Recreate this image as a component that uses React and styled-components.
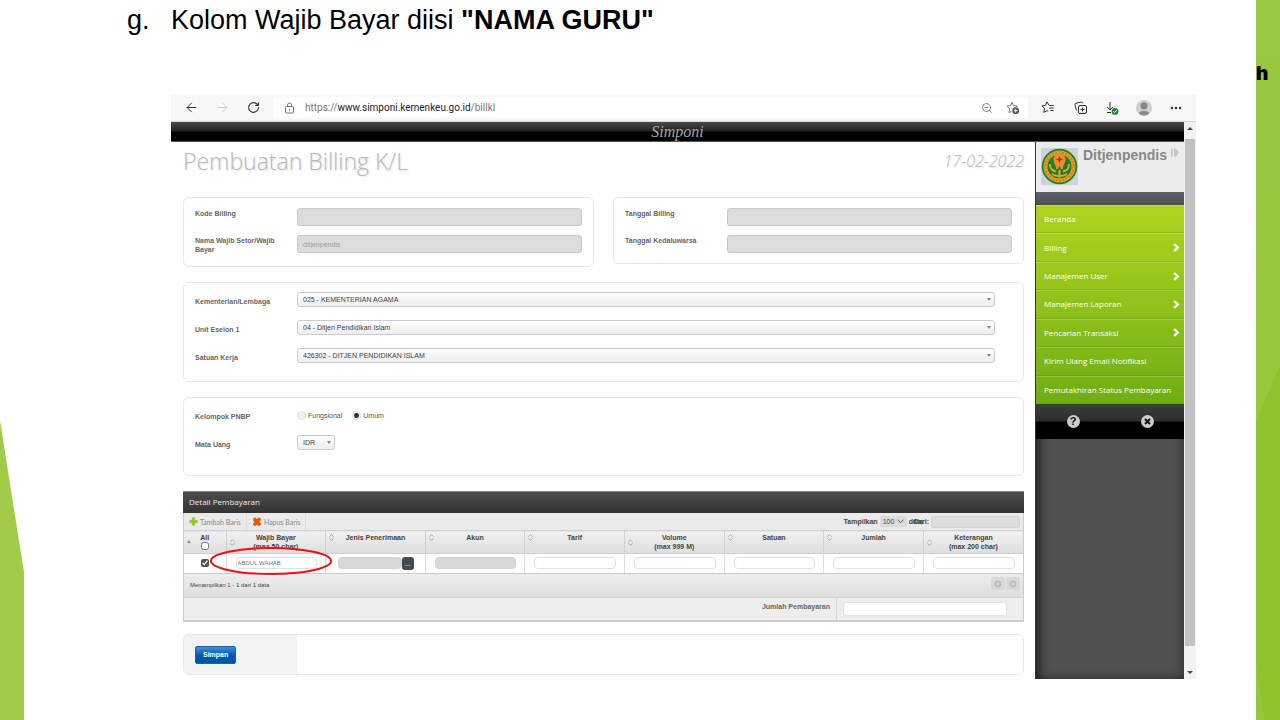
import React from 'react';
import styled, { createGlobalStyle } from 'styled-components';
import { ArrowLeft, ArrowRight, Ellipsis, RotateCw, ZoomOut } from 'lucide-react';

const GlobalStyle = createGlobalStyle`
  *, *::before, *::after { box-sizing: border-box; }
  body {
    margin: 0;
    background: #fff;
    color: #555;
    font: 7px/9px "Liberation Sans", Arial, sans-serif;
  }
  button, input, select { font: inherit; color: inherit; margin: 0; }
  button { border: 0; padding: 0; background: none; }
  svg { display: block; }
`;

const Slide = styled.div`
  display: grid;
  grid-template-columns: 24px minmax(0, 1fr) 24px;
  min-height: 100vh;
`;

const LeftEdge = styled.div`
  height: 300px;
  align-self: end;
  background: #a1cb48;
  clip-path: polygon(0 0, 24px 152px, 24px 100%, 0 100%);
`;

const RightEdge = styled.div`
  overflow: hidden;
  padding-top: 63px;
  background:
    linear-gradient(#99c83f, #98c73c) 0 0 / 24px 365px no-repeat,
    linear-gradient(to bottom right, #98c73c 50%, #90c22b 51%) 0 365px / 24px 55px no-repeat,
    linear-gradient(to top right, #96c63a 50%, transparent 51%) 0 100% / 9px 55px no-repeat,
    #90c22b;
  color: #000;
  font: 900 19px/22px Inter, sans-serif;
`;

const Main = styled.main`
  padding: 5px 60px 42px 103px;
`;

const Instruction = styled.h1`
  display: grid;
  grid-template-columns: 44px 1fr;
  margin: 0 0 60px;
  color: #000;
  font-size: 27px;
  font-weight: 400;
  line-height: 30px;
`;

const Browser = styled.section`
  margin-left: 44px;
`;

const Toolbar = styled.div`
  display: flex;
  align-items: center;
  gap: 4px;
  padding: 2px 4px 3px 5px;
  border-bottom: 1px solid #d5d5d5;
  background: #f7f7f7;
  color: #333;
`;

const ToolGroup = styled.div`
  display: flex;
`;

const ToolButton = styled.button`
  display: grid;
  place-items: center;
  width: ${(p) => p.$width || 32}px;
  height: 21px;
  color: ${(p) => (p.$muted ? '#ccc' : '#333')};
`;

const AddressBar = styled.div`
  flex: 1;
  display: flex;
  align-items: center;
  height: 21px;
  padding: 0 2px 0 11px;
  border-radius: 3px;
  background: #fff;
  color: #777;
  font: 10px/14px Roboto, sans-serif;
`;

const Url = styled.span`
  flex: 1;
  margin-left: 10px;
  b { color: #222; font-weight: 400; }
`;

const Viewport = styled.div`
  display: grid;
  grid-template-columns: minmax(0, 1fr) 12px;
`;

const TopBar = styled.header`
  height: 20px;
  border-bottom: 1px solid #555;
  background: linear-gradient(#4b4b4b, #1f1f1f 48%, #000 52%);
  color: #a5a5a5;
  text-align: center;
  font: italic 16px/19px "Liberation Serif", serif;
`;

const Scrollbar = styled.div`
  display: flex;
  flex-direction: column;
  align-items: center;
  background: #f1f1f1;
`;

const Thumb = styled.div`
  flex: 1;
  width: 10px;
  margin: 9px 0 25px;
  background: #c1c1c1;
`;

const ScrollArrow = styled.div`
  margin: ${(p) => (p.$down ? '0 0 5px' : '5px 0 0')};
  border: 3px solid transparent;
  border-top-width: ${(p) => (p.$down ? 3 : 0)}px;
  border-bottom-width: ${(p) => (p.$down ? 0 : 3)}px;
  border-top-color: ${(p) => (p.$down ? '#444' : 'transparent')};
  border-bottom-color: ${(p) => (p.$down ? 'transparent' : '#444')};
`;

const Page = styled.div`
  display: grid;
  grid-template-columns: minmax(0, 1fr) 149px;
`;

const Content = styled.div`
  padding: 2px 11px 4px 12px;
`;

const TitleRow = styled.div`
  display: flex;
  justify-content: space-between;
  margin-bottom: 19px;
  color: #b9b9b9;
  font: 300 23px/34px "Open Sans", sans-serif;
  text-shadow: 1px 1px 2px #ddd;
`;

const Title = styled.h2`
  margin: 0;
  font: inherit;
`;

const PageDate = styled.span`
  font-size: 16px;
  font-style: italic;
`;

const PanelPair = styled.div`
  display: grid;
  grid-template-columns: 1fr 1fr;
  align-items: start;
  gap: 19px;
  margin-bottom: 15px;
`;

const Panel = styled.div`
  display: grid;
  gap: ${(p) => p.$gap || 9}px;
  padding: 10px 11px;
  border: 1px solid #e8e8e8;
  border-radius: 6px;
  box-shadow: 0 0 1px #eee;
`;

const FormPanel = styled(Panel)`
  margin-bottom: 15px;
  padding: 9px 28px ${(p) => p.$bottom}px 11px;
`;

const Field = styled.div`
  display: grid;
  grid-template-columns: 102px minmax(0, 1fr);
  align-items: start;
`;

const Label = styled.label`
  padding: ${(p) => (p.$low ? 5 : 1)}px 12px 2px 0;
  color: #666;
  font-weight: 700;
`;

const GrayInput = styled.input`
  width: 100%;
  height: 18px;
  padding: 0 5px;
  border: 1px solid #c9c9c9;
  border-radius: 3px;
  background: #dcdcdc;
  color: #999;
`;

const SelectWrap = styled.span`
  display: flex;
  align-items: center;
  position: relative;
  width: ${(p) => p.$width || '100%'};
  &::after {
    content: '';
    position: absolute;
    right: 4px;
    border: 2px solid transparent;
    border-top: 3px solid #888;
    border-bottom: 0;
  }
`;

const Select = styled.select`
  appearance: none;
  width: 100%;
  height: 15px;
  padding: 0 5px;
  border: 1px solid #ccc;
  border-radius: 3px;
  background: linear-gradient(#fff, #f4f4f4 50%, #eee);
  color: #444;
`;

const RadioGroup = styled.div`
  display: flex;
  gap: 10px;
  padding-top: 4px;
`;

const RadioLabel = styled.label`
  display: flex;
  align-items: center;
  gap: 2px;
`;

const Radio = styled.input`
  appearance: none;
  width: 9px;
  height: 9px;
  border: 1px solid #ddd;
  border-radius: 50%;
  background: #f2f2f2;
  &:checked { background: radial-gradient(circle, #333 0 2px, #f2f2f2 3px); }
`;

const Detail = styled.section`
  border: 1px solid #ccc;
  border-top: 0;
  border-bottom-width: 2px;
  margin-bottom: 12px;
`;

const DetailTitle = styled.h3`
  margin: 0 -1px;
  height: 22px;
  padding: 0 6px;
  border-top: 1px solid #888;
  background: linear-gradient(#4c4c4c, #333);
  color: #eee;
  font: 400 8px/20px "Open Sans", sans-serif;
`;

const TableTools = styled.div`
  display: flex;
  height: 17px;
  padding-right: 3px;
  background: #eaeaea;
`;

const RowButton = styled.button`
  display: flex;
  align-items: center;
  gap: 2px;
  padding: 0 5px;
  border-right: 1px solid #ddd;
  color: #888;
  font: 7px/12px Lato, sans-serif;
`;

const Filters = styled.div`
  display: flex;
  align-items: center;
  margin-left: auto;
  color: #444;
  font-weight: 700;
`;

const CountSelect = styled.select`
  appearance: none;
  width: 27px;
  height: 11px;
  padding: 0 3px;
  border: 0;
  border-radius: 2px;
  background: #dcdcdc;
  font-weight: 400;
`;

const CountWrap = styled.span`
  display: flex;
  align-items: center;
  position: relative;
  margin: 0 2px;
  svg { position: absolute; right: 3px; pointer-events: none; }
`;

/* the search label runs over the end of the page-size text */
const SearchLabel = styled.label`
  margin-left: -10px;
`;

const SearchInput = styled.input`
  width: 89px;
  height: 12px;
  margin-left: 2px;
  border: 1px solid #d4d4d4;
  border-radius: 2px;
  background: #dcdcdc;
`;

const Table = styled.table`
  width: 100%;
  border-collapse: collapse;
  table-layout: fixed;
`;

const Th = styled.th`
  width: ${(p) => p.$width || 'auto'};
  height: 23px;
  padding: 2px 3px;
  border: 1px solid #d0d0d0;
  border-width: 1px 1px 1px 0;
  background: linear-gradient(#f0f0f0, #dedede);
  color: #444;
  vertical-align: top;
  &:last-child { border-right: 0; }
`;

const HeadCell = styled.div`
  display: grid;
  grid-template-columns: 5px 1fr 5px;
  align-items: center;
  white-space: pre-line;
`;

const Td = styled.td`
  height: 19px;
  padding: ${(p) => (p.$picker ? '0 11px 0 12px' : '0 8px 0 9px')};
  border-right: 1px solid #ddd;
  &:last-child { border-right: 0; }
`;

const CellBox = styled.div`
  display: flex;
  align-items: center;
  position: relative;
`;

const CellInput = styled.input`
  flex: 1;
  min-width: 0;
  height: 12px;
  padding: 0 1px;
  border: 1px solid ${(p) => (p.readOnly ? '#d2d2d2' : '#e0e0e0')};
  border-radius: 4px;
  background: ${(p) => (p.readOnly ? '#d8d8d8' : '#fff')};
  color: #777;
  font-size: 6px;
`;

const PickButton = styled.button`
  width: 12px;
  height: 13px;
  border-radius: 3px;
  background: #444a57;
  color: #fff;
`;

const Tick = styled.input`
  display: block;
  width: 8px;
  height: 8px;
  margin: ${(p) => (p.$head ? '0 auto' : '0 9px 0 auto')};
  accent-color: #555;
`;

const Highlight = styled.svg`
  position: absolute;
  left: -26px;
  top: -10px;
  pointer-events: none;
  overflow: visible;
`;

const TableFooter = styled.div`
  display: flex;
  align-items: center;
  justify-content: space-between;
  height: 24px;
  padding: 0 3px 0 6px;
  border-top: 1px solid #ccc;
  background: linear-gradient(#ededed, #dedede);
  font-size: 6px;
  color: #444;
`;

const Pager = styled.div`
  display: flex;
  gap: 1px;
  margin-bottom: 3px;
`;

const PagerButton = styled.button`
  display: grid;
  place-items: center;
  width: 14px;
  height: 13px;
  border-radius: 2px;
  background: #d9d9d9;
`;

const Total = styled.div`
  display: grid;
  grid-template-columns: 1fr 186px;
  border-top: 1px solid #d5d5d5;
  background: #ededed;
  color: #666;
  font-weight: 700;
`;

const TotalLabel = styled.label`
  padding: 4px 6px 0;
  border-right: 1px solid #d5d5d5;
  text-align: right;
`;

const TotalInput = styled.input`
  height: 14px;
  margin: 4px 16px 4px 6px;
  border: 1px solid #e2e2e2;
  border-radius: 3px;
  min-width: 0;
`;

const SavePanel = styled.div`
  padding: 11px 11px 10px;
  border: 1px solid #e8e8e8;
  border-radius: 6px;
  background: linear-gradient(90deg, #f2f3f5 113px, #fff 113px);
`;

const SaveButton = styled.button`
  display: block;
  height: 18px;
  padding: 0 7px;
  border: 1px solid #1c5fac;
  border-radius: 2px;
  background: linear-gradient(#3f8fd6, #0b58b0 50%, #0650a5);
  color: #fff;
  font-weight: 700;
`;

const Sidebar = styled.aside`
  display: flex;
  flex-direction: column;
  border-left: 1px solid #333;
  background: #505050;
  box-shadow: inset 8px -3px 10px -4px #222, inset -6px 0 8px -4px #333;
`;

const Profile = styled.div`
  display: flex;
  gap: 4px;
  height: 50px;
  padding: 6px 5px;
  background: #ececec;
  color: #888;
  font-size: 14px;
  font-weight: 700;
  line-height: 14px;
`;

const Strip = styled.div`
  height: 13px;
  background: linear-gradient(#5c6167, #4c5055);
`;

const Menu = styled.nav`
  display: flex;
  flex-direction: column;
  height: 199px;
  background: linear-gradient(#afd41f, #90c21a 50%, #6fad14);
`;

const MenuItem = styled.a`
  flex: 1;
  display: flex;
  align-items: center;
  justify-content: space-between;
  padding: 0 4px 0 8px;
  border-top: 1px solid #ffffff30;
  border-bottom: 1px solid #5a8f1055;
  color: #fff;
  font: 8px/12px "Open Sans", sans-serif;
  text-decoration: none;
`;

const SideActions = styled.div`
  display: grid;
  grid-template-columns: 1fr 1fr;
  place-items: center;
  height: 35px;
  background: linear-gradient(#3e3e3e, #2c2c2c 48%, #000 52%);
`;

const RoundButton = styled.button`
  display: grid;
  place-items: center;
  width: 13px;
  height: 13px;
  border-radius: 50%;
  background: #ccc;
  color: #111;
  font-weight: 700;
  font-size: 11px;
`;

const LockIcon = () => (
  <svg width="11" height="12" viewBox="0 0 11 12" fill="none" stroke="#777">
    <rect x="1.5" y="4.500" width="8" height="6.500" rx="1" />
    <path d="M3.500 4.500V3a2 2 0 0 1 4 0v1.500M5.500 7v1.500" />
  </svg>
);

const StarAddIcon = () => (
  <svg width="14" height="14" viewBox="0 0 14 14" fill="none" stroke="#666" strokeWidth=".9">
    <path d="M6 1.200 7.500 4.600l3.700.4-1 1M6 1.200 4.500 4.600 1 5l2.600 2.700L3 11.600l2.600-1.400" />
    <circle cx="9.700" cy="9.700" r="3.400" fill="#555" stroke="none" />
    <path d="M9.700 7.800v3.800M7.800 9.700h3.800" stroke="#fff" />
  </svg>
);

const FavouritesIcon = () => (
  <svg width="14" height="13" viewBox="0 0 14 13" fill="none" stroke="currentColor">
    <path d="M8 4.200 6 .9 4.400 4.400.9 4.900l2.600 2.500-.7 4 3.200-1.800 1.300.8M8.200 4.500h4.500M8.200 7h4.500M9.200 9.500h3.500" />
  </svg>
);

const CollectionsIcon = () => (
  <svg width="13" height="13" viewBox="0 0 13 13" fill="none" stroke="currentColor">
    <rect x="4.500" y="4.500" width="8" height="8" rx="1.500" />
    <path d="M8.500 6.500v4M6.500 8.500h4M2.500 9.500 1 3.800Q.8 2.500 2 2.200L7.400 1q1.200-.1 1.600 1.300" />
  </svg>
);

const DownloadIcon = () => (
  <svg width="14" height="14" viewBox="0 0 14 14" fill="none" stroke="currentColor">
    <path d="M5 1v8M2 6l3 3 3-3M2 11.500h4" />
    <circle cx="10" cy="10.400" r="3.400" fill="#168a3a" stroke="none" />
    <path d="m8.400 10.400 1.200 1.200 2-2.200" stroke="#fff" />
  </svg>
);

const AvatarIcon = () => (
  <svg width="16" height="16" viewBox="0 0 16 16">
    <circle cx="8" cy="8" r="8" fill="#d2d0ce" />
    <circle cx="8" cy="5.800" r="3.600" fill="#8a8886" />
    <path d="M3 12.200q5-3 10 0-1 3.300-5 3.300t-5-3.300" fill="#8a8886" />
  </svg>
);

const EmblemSvg = styled.svg`
  flex: none;
  margin-right: 1px;
`;

const Emblem = () => (
  <EmblemSvg width="37" height="37" viewBox="0 0 37 37">
    <rect width="37" height="37" fill="#c9d4dc" />
    <circle cx="18.500" cy="18.500" r="17.800" fill="#17803a" />
    <circle cx="18.500" cy="18.500" r="16" fill="#e9a11b" />
    <circle cx="18.500" cy="18.500" r="14" fill="none" stroke="#c9801d" strokeWidth="2" strokeDasharray="2 1.400" />
    <circle cx="18.500" cy="18.500" r="12" fill="#17803a" />
    <path d="M18.500 6c4 0 6.500 3 6 6.500-.4 3.500-3 5-2.500 8.500h-2l-1.500-3-1.500 3h-2c.5-3.500-2.100-5-2.500-8.500-.5-3.500 2-6.500 6-6.500Z" fill="#f08a2c" />
    <path d="m18.500 8 1 2.500 2.500 1-2.500 1-1 2.500-1-2.500-2.500-1 2.500-1Z" fill="#7a4a12" />
    <path d="M9 16c0 5 3 7 6 7.500M28 16c0 5-3 7-6 7.500M11 26q7.500 4.500 15 0M18.500 22v8" fill="none" stroke="#e9a11b" strokeWidth="2" />
  </EmblemSvg>
);

const StepIcon = () => (
  <svg width="9" height="9" viewBox="0 0 9 9" fill="#c3c3c3">
    <path d="M0 0h2v9H0zM3.500 0h2L9 4.500 5.500 9h-2z" />
  </svg>
);

const ChevronIcon = () => (
  <svg width="7" height="9" viewBox="0 0 7 9" fill="none" stroke="#fff" strokeWidth="2.400">
    <path d="m1.200 1 3.600 3.500L1.200 8" />
  </svg>
);

const PlusIcon = () => (
  <svg width="9" height="9" viewBox="0 0 9 9">
    <path d="M3 .5h3V3h2.500v3H6v2.500H3V6H.5V3H3z" fill="#8ccb2c" stroke="#b1de68" strokeWidth=".5" />
  </svg>
);

const CrossIcon = () => (
  <svg width="10" height="10" viewBox="0 0 10 10">
    <path d="m1.500 1 2-.5L5 2 6.500.5l2 .5.500 2L7.500 5 9 6.500l-.5 2-2 .5L5 7.800 3.500 9l-2-.5-.5-2L2.500 5 1 3.300z" fill="#e65a17" />
  </svg>
);

const SortIcon = () => (
  <svg width="5" height="7" viewBox="0 0 5 7" fill="none" stroke="#999" strokeWidth=".8">
    <path d="M.3 2.700 2.500.6l2.200 2.100M.3 4.300l2.200 2.100 2.200-2.100" />
  </svg>
);

const PagerIcon = () => (
  <svg width="8" height="8" viewBox="0 0 8 8" fill="none">
    <circle cx="4" cy="4" r="2.600" stroke="#b9b9b9" strokeWidth="1.600" />
  </svg>
);

const menuItems = [
  ['Beranda', false],
  ['Billing', true],
  ['Manajemen User', true],
  ['Manajemen Laporan', true],
  ['Pencarian Transaksi', true],
  ['Kirim Ulang Email Notifikasi', false],
  ['Pemutakhiran Status Pembayaran', false],
];

const columns = [
  'Wajib Bayar\n(max 50 char)',
  'Jenis Penerimaan',
  'Akun',
  'Tarif',
  'Volume\n(max 999 M)',
  'Satuan',
  'Jumlah',
  'Keterangan\n(max 200 char)',
];

const units = [
  ['kementerian', 'Kementerian/Lembaga', '025 - KEMENTERIAN AGAMA'],
  ['eselon', 'Unit Eselon 1', '04 - Ditjen Pendidikan Islam'],
  ['satker', 'Satuan Kerja', '426302 - DITJEN PENDIDIKAN ISLAM'],
];

function TextField({ id, label, value = '' }) {
  return (
    <Field>
      <Label htmlFor={id}>{label}</Label>
      <GrayInput id={id} defaultValue={value} readOnly />
    </Field>
  );
}

function BrowserBar() {
  return (
    <Toolbar>
      <ToolGroup>
        <ToolButton $width={31} aria-label="Back"><ArrowLeft size={15} strokeWidth={1.6} /></ToolButton>
        <ToolButton $width={31} $muted aria-label="Forward"><ArrowRight size={15} strokeWidth={1.6} /></ToolButton>
        <ToolButton $width={31} aria-label="Reload"><RotateCw size={13} strokeWidth={2} /></ToolButton>
      </ToolGroup>
      <AddressBar>
        <LockIcon />
        <Url>https://<b>www.simponi.kemenkeu.go.id</b>/billkl</Url>
        <ToolButton $width={26} aria-label="Zoom out"><ZoomOut size={12} strokeWidth={1.6} color="#666" /></ToolButton>
        <ToolButton $width={26} aria-label="Add to favourites"><StarAddIcon /></ToolButton>
      </AddressBar>
      <ToolGroup>
        <ToolButton aria-label="Favourites"><FavouritesIcon /></ToolButton>
        <ToolButton aria-label="Collections"><CollectionsIcon /></ToolButton>
        <ToolButton aria-label="Downloads"><DownloadIcon /></ToolButton>
        <ToolButton aria-label="Profile"><AvatarIcon /></ToolButton>
        <ToolButton aria-label="More"><Ellipsis size={14} strokeWidth={2.4} /></ToolButton>
      </ToolGroup>
    </Toolbar>
  );
}

function PaymentTable() {
  return (
    <Detail>
      <DetailTitle>Detail Pembayaran</DetailTitle>
      <TableTools>
        <RowButton><PlusIcon />Tambah Baris</RowButton>
        <RowButton><CrossIcon />Hapus Baris</RowButton>
        <Filters>
          <label htmlFor="count">Tampilkan</label>
          <CountWrap>
            <CountSelect id="count"><option>100</option></CountSelect>
            <svg width="7" height="5" viewBox="0 0 7 5" fill="none" stroke="#555">
              <path d="m.5.700 3 3 3-3" />
            </svg>
          </CountWrap>
          <span>data</span>
          <SearchLabel htmlFor="search">Cari:</SearchLabel>
          <SearchInput id="search" />
        </Filters>
      </TableTools>
      <Table>
        <thead>
          <tr>
            <Th $width="42px">
              <HeadCell>
                <svg width="4" height="3" viewBox="0 0 4 3"><path d="m0 3 2-3 2 3z" fill="#888" /></svg>
                <span>All<Tick $head type="checkbox" aria-label="All" /></span>
              </HeadCell>
            </Th>
            {columns.map((name) => (
              <Th key={name}><HeadCell><SortIcon /><span>{name}</span></HeadCell></Th>
            ))}
          </tr>
        </thead>
        <tbody>
          <tr>
            <Td><Tick type="checkbox" defaultChecked aria-label="Baris 1" /></Td>
            {columns.map((name, i) => (
              <Td key={name} $picker={i === 1}>
                <CellBox>
                  <CellInput
                    aria-label={name}
                    defaultValue={i === 0 ? 'ABDUL WAHAB' : ''}
                    readOnly={i === 1 || i === 2}
                  />
                  {i === 1 && <PickButton aria-label="Pilih">...</PickButton>}
                  {i === 0 && (
                    <Highlight width="122" height="30" fill="none" stroke="#ee1111" strokeWidth="2">
                      <ellipse cx="61" cy="14" rx="60" ry="13" />
                    </Highlight>
                  )}
                </CellBox>
              </Td>
            ))}
          </tr>
        </tbody>
      </Table>
      <TableFooter>
        <span>Menampilkan 1 - 1 dari 1 data</span>
        <Pager>
          <PagerButton aria-label="Sebelumnya"><PagerIcon /></PagerButton>
          <PagerButton aria-label="Berikutnya"><PagerIcon /></PagerButton>
        </Pager>
      </TableFooter>
      <Total>
        <TotalLabel htmlFor="total">Jumlah Pembayaran</TotalLabel>
        <TotalInput id="total" />
      </Total>
    </Detail>
  );
}

function App() {
  return (
    <Slide>
      <GlobalStyle />
      <LeftEdge />
      <Main>
        <Instruction>
          <span>g.</span>
          <span>Kolom Wajib Bayar diisi <b>"NAMA GURU"</b></span>
        </Instruction>
        <Browser>
          <BrowserBar />
          <Viewport>
            <div>
              <TopBar>Simponi</TopBar>
              <Page>
                <Content>
                  <TitleRow>
                    <Title>Pembuatan Billing K/L</Title>
                    <PageDate>17-02-2022</PageDate>
                  </TitleRow>
                  <PanelPair>
                    <Panel>
                      <TextField id="kode" label="Kode Billing" />
                      <TextField id="nama" label="Nama Wajib Setor/Wajib Bayar" value="ditjenpendis" />
                    </Panel>
                    <Panel>
                      <TextField id="tanggal" label="Tanggal Billing" />
                      <TextField id="kedaluwarsa" label="Tanggal Kedaluwarsa" />
                    </Panel>
                  </PanelPair>
                  <FormPanel $gap={12} $bottom={17}>
                    {units.map(([id, label, value]) => (
                      <Field key={id}>
                        <Label $low htmlFor={id}>{label}</Label>
                        <SelectWrap><Select id={id}><option>{value}</option></Select></SelectWrap>
                      </Field>
                    ))}
                  </FormPanel>
                  <FormPanel $gap={12} $bottom={24}>
                    <Field>
                      <Label as="span" $low id="kelompok">Kelompok PNBP</Label>
                      <RadioGroup role="radiogroup" aria-labelledby="kelompok">
                        <RadioLabel><Radio type="radio" name="pnbp" />Fungsional</RadioLabel>
                        <RadioLabel><Radio type="radio" name="pnbp" defaultChecked />Umum</RadioLabel>
                      </RadioGroup>
                    </Field>
                    <Field>
                      <Label $low htmlFor="uang">Mata Uang</Label>
                      <SelectWrap $width="38px"><Select id="uang"><option>IDR</option></Select></SelectWrap>
                    </Field>
                  </FormPanel>
                  <PaymentTable />
                  <SavePanel><SaveButton>Simpan</SaveButton></SavePanel>
                </Content>
                <Sidebar>
                  <Profile>
                    <Emblem />
                    <span>Ditjenpendis</span>
                    <StepIcon />
                  </Profile>
                  <Strip />
                  <Menu>
                    {menuItems.map(([name, nested]) => (
                      <MenuItem key={name} href="#">{name}{nested && <ChevronIcon />}</MenuItem>
                    ))}
                  </Menu>
                  <SideActions>
                    <RoundButton aria-label="Bantuan">?</RoundButton>
                    <RoundButton aria-label="Keluar">
                      <svg width="7" height="7" viewBox="0 0 7 7" stroke="#111" strokeWidth="2"><path d="m1 1 5 5M6 1 1 6" /></svg>
                    </RoundButton>
                  </SideActions>
                </Sidebar>
              </Page>
            </div>
            <Scrollbar>
              <ScrollArrow />
              <Thumb />
              <ScrollArrow $down />
            </Scrollbar>
          </Viewport>
        </Browser>
      </Main>
      <RightEdge>h</RightEdge>
    </Slide>
  );
}

export default App;
